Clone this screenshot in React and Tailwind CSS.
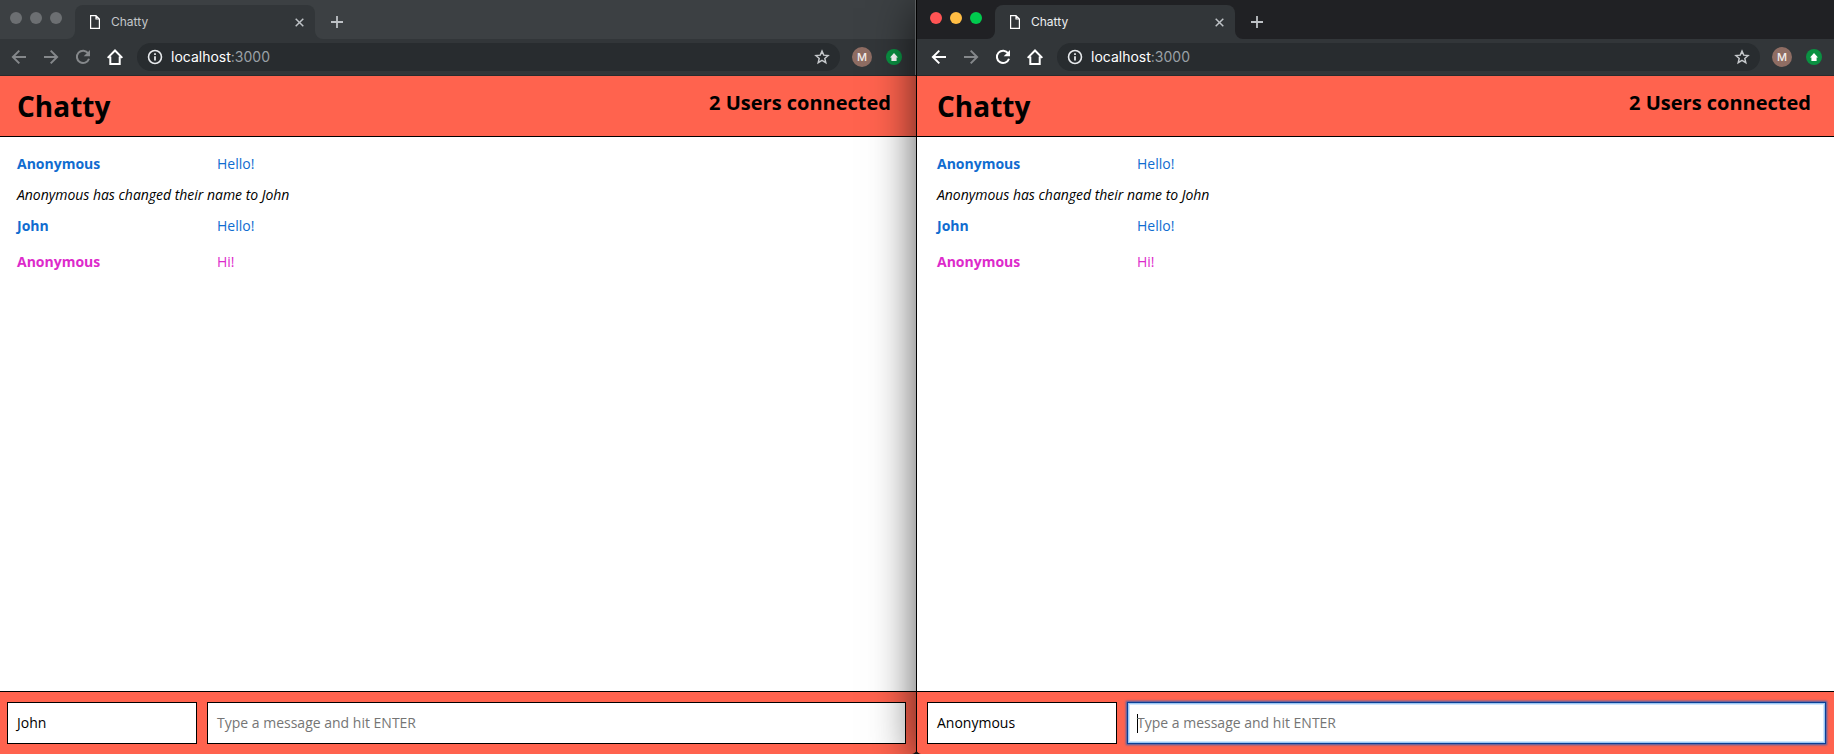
const messages = [
  { name: "Anonymous", text: "Hello!", tone: "text-[#106cd0]" },
  { notice: "Anonymous has changed their name to John" },
  { name: "John", text: "Hello!", tone: "text-[#106cd0]" },
  { name: "Anonymous", text: "Hi!", tone: "text-[#dd2acb]" },
];

function Icon({ children, className, size = 20 }) {
  return (
    <svg width={size} height={size} viewBox="0 0 20 20" fill="none" stroke="currentColor" strokeWidth="2" className={`shrink-0 ${className}`}>
      {children}
    </svg>
  );
}

function TabBar({ active }) {
  const dots = active ? ["bg-[#ff5454]", "bg-[#ffbd44]", "bg-[#00ca4e]"] : ["bg-[#6c6f72]", "bg-[#6c6f72]", "bg-[#6c6f72]"];
  return (
    <div className={`flex h-[39px] pl-[10px] ${active ? "bg-[#202124]" : "bg-[#3c4043]"}`}>
      <div className="flex gap-2 pt-3">
        {dots.map((c, i) => <div key={i} className={`size-3 rounded-full ${c}`} />)}
      </div>
      <div className="ml-[5px] flex w-[256px] items-end">
        <svg width="8" height="8" className="shrink-0"><path d="M8 0V8H0A8 8 0 0 0 8 0" fill="#323639" /></svg>
        <div className="flex h-[34px] w-[240px] items-center rounded-t-[8px] bg-[#323639] pl-[15px] pr-[11px]">
          <svg width="10" height="14" viewBox="0 0 10 14" fill="none" stroke="#fff" strokeWidth="1.2" className="shrink-0">
            <path d="M.6.6H6L9.4 4V13.4H.6Z M6 .6V4H9.4" />
          </svg>
          <span className={`ml-[11px] grow text-[12px] leading-none ${active ? "text-[#eceef0]" : "text-[#c3c6c9]"}`}>Chatty</span>
          <svg width="9" height="9" viewBox="0 0 9 9" fill="none" stroke="#bec2c6" strokeWidth="1.5"><path d="M.7.7 8.3 8.3M8.3.7.7 8.3" /></svg>
        </div>
        <svg width="8" height="8" className="shrink-0"><path d="M0 0V8H8A8 8 0 0 1 0 0" fill="#323639" /></svg>
      </div>
      <svg width="12" height="12" viewBox="0 0 12 12" fill="none" stroke="#bec2c6" strokeWidth="1.8" className="mt-4 ml-[8px]"><path d="M6 0V12M0 6H12" /></svg>
    </div>
  );
}

function Toolbar({ active }) {
  const on = active ? "text-white" : "text-[#85888b]";
  return (
    <div className="flex h-[37px] items-center border-b border-[#292b2d] bg-[#323639] pl-[9px]">
      <Icon className={on}><path d="M17 10H4M10.3 3.6 3.9 10 10.3 16.4" /></Icon>
      <Icon className="ml-[12px] text-[#85888b]"><path d="M3 10H16M9.7 3.6 16.1 10 9.7 16.4" /></Icon>
      <Icon className={`ml-[12px] ${on}`}>
        <path d="M15.2 6.3A6.2 6.2 0 1 0 16 11.8" />
        <path d="M17 3V9.3H10.7Z" fill="currentColor" stroke="none" />
      </Icon>
      <Icon className="ml-[12px] text-white"><path d="M2.7 10.9 10 3.5 17.3 10.9M5.3 9.6V17H14.7V9.6" /></Icon>
      <div className="ml-[12px] flex h-[28px] w-[703px] items-center rounded-full bg-[#282c2f] pl-[10px] pr-[10px]">
        <Icon size={16} className="text-[#e8eaed]"><circle cx="10" cy="10" r="8.1" /><path d="M10 9V14.5M10 5.3V7.4" strokeWidth="2.2" /></Icon>
        <span className="ml-2 grow text-[14px] leading-none text-[#9aa0a6]"><span className="text-white">localhost</span>:3000</span>
        <svg width="16" height="16" viewBox="0 0 24 24" fill="none" stroke="#c6c9cc" strokeWidth="2.2">
          <path d="m12 3.2 2.6 6 6.5.6-4.9 4.3 1.5 6.4L12 17.1l-5.7 3.4 1.5-6.4-4.9-4.3 6.5-.6Z" />
        </svg>
      </div>
      <div className="ml-[12px] flex size-5 items-center justify-center rounded-full bg-[#8f6d63] text-[11px] leading-none font-medium text-[#f3eeec]">M</div>
      <svg width="16" height="16" viewBox="0 0 16 16" className="ml-[14px]">
        <circle cx="8" cy="8" r="8" fill="#0a9142" />
        <path d="M8 4 12 8.6H10.6V12H5.4V8.6H4Z" fill="#fff" />
      </svg>
    </div>
  );
}

function Chat({ user, active }) {
  return (
    <div className="flex min-h-0 grow flex-col font-['Open_Sans','Noto_Sans',sans-serif] text-[14px] text-black">
      <header className={`flex h-[61px] items-start justify-between border-b border-black bg-[#ff634e] pl-[17px] ${active ? "pr-[23px]" : "pr-[25px]"}`}>
        <h1 className="pt-[12px] text-[28px] leading-[36px] font-bold">Chatty</h1>
        <p className="pt-[14px] text-[20px] leading-[26px] font-bold">2 Users connected</p>
      </header>
      <main className="grow bg-white pt-[8px] pl-[17px]">
        {messages.map((m, i) => m.notice ? (
          <p key={i} className="flex h-[26px] items-center tracking-[-0.02px] italic">{m.notice}</p>
        ) : (
          <div key={i} className={`flex h-[36px] items-center ${m.tone}`}>
            <span className="w-[200px] font-bold">{m.name}</span>
            <span>{m.text}</span>
          </div>
        ))}
      </main>
      <footer className="flex h-[63px] items-start gap-[10px] border-t border-black bg-[#ff634e] pt-[10px] pl-[7px]">
        <div className="flex h-[42px] w-[190px] items-center border border-black bg-white pb-[2px] pl-[9px]">{user}</div>
        <div className={`flex h-[42px] w-[699px] items-center border bg-white pb-[2px] pl-[9px] text-[#757575] ${active ? "border-[#0a3f94] shadow-[0_0_2px_1px_#3563b8,inset_0_0_0_1px_#9cc7f5,inset_0_0_0_2px_#d3e6fc]" : "border-black"}`}>
          {active && <span className="mt-[2px] -mr-px h-[19px] w-px bg-black" />}
          Type a message and hit ENTER
        </div>
      </footer>
    </div>
  );
}

function BrowserWindow({ user, active = false }) {
  return (
    <section className={`flex h-full flex-col overflow-hidden font-[Inter,sans-serif] ${active ? "w-[914px]" : "w-[916px]"}`}>
      <TabBar active={active} />
      <Toolbar active={active} />
      <Chat user={user} active={active} />
    </section>
  );
}

export default function App() {
  return (
    <div className="flex h-[754px] w-[1834px] overflow-hidden bg-[#323639]">
      <BrowserWindow user="John" />
      <div className="relative z-10 flex w-[918px] shrink-0 border-l border-black shadow-[0_8px_42px_rgba(0,0,0,0.65)]">
        <div className="flex w-[3px] shrink-0 flex-col">
          <div className="h-[39px] bg-[#202124]" />
          <div className="h-[36px] bg-[#323639]" />
          <div className="h-px bg-[#292b2d]" />
          <div className="h-[60px] bg-[#ff634e]" />
          <div className="h-px bg-black" />
          <div className="grow bg-white" />
          <div className="h-[63px] border-t border-black bg-[#ff634e]" />
        </div>
        <BrowserWindow user="Anonymous" active />
        <div className="absolute top-0 -left-[2px] h-[75px] w-px bg-[#5b5e60]" />
        <svg width="9" height="4" viewBox="0 0 9 4" className="absolute bottom-0 -left-[5px]"><path d="M4.5 0Q5 3 9 4H0Q4 3 4.5 0Z" fill="#111" /></svg>
      </div>
    </div>
  );
}
